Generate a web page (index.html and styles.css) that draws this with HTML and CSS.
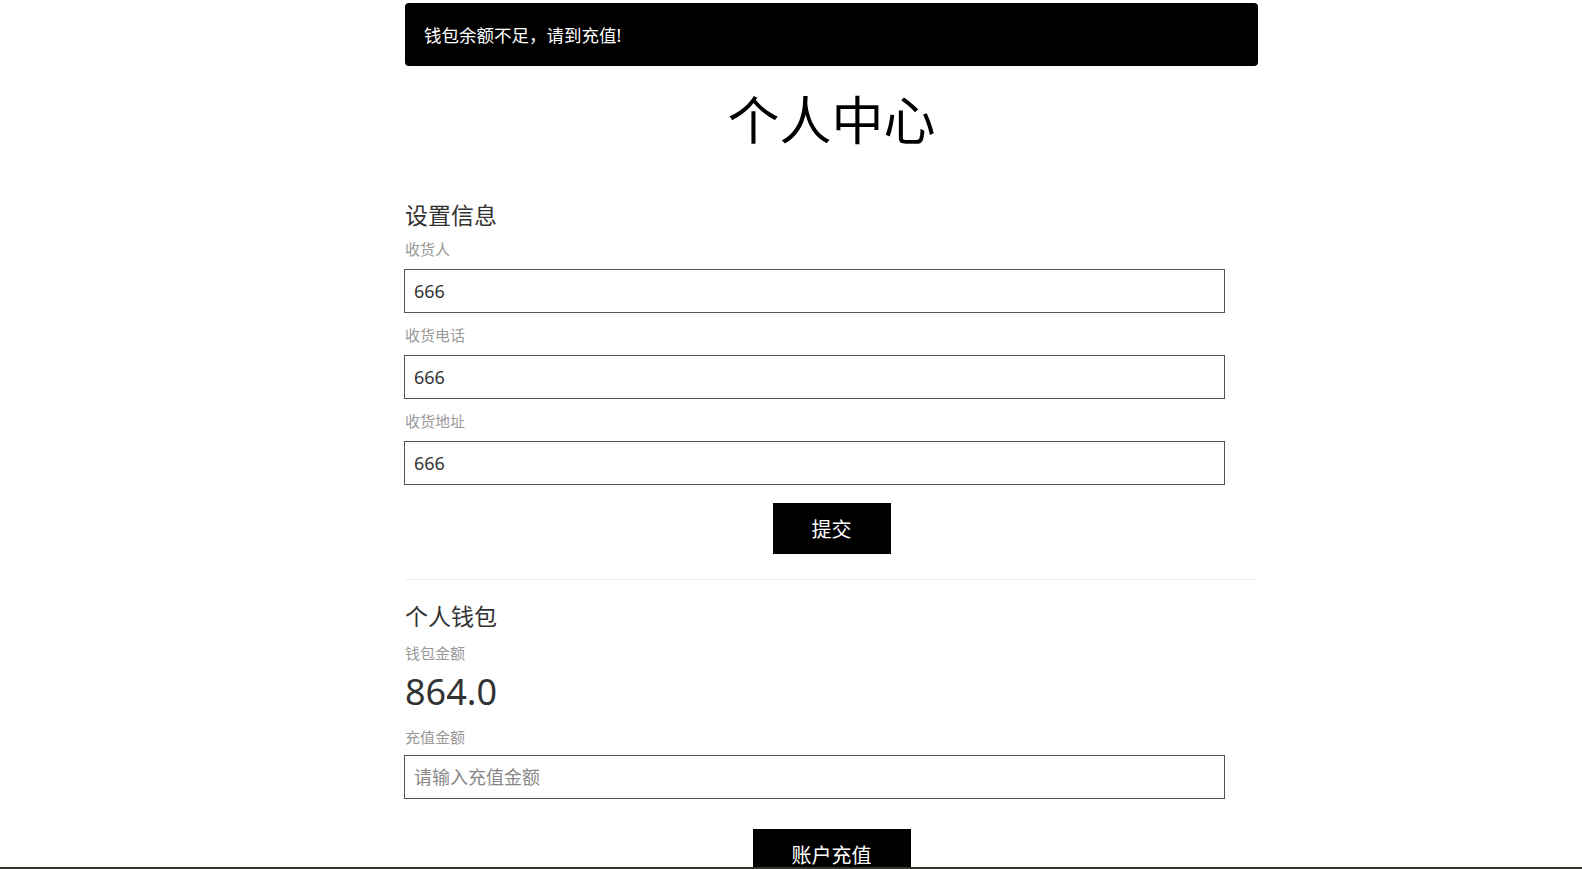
FILE: index.html
```html
<!DOCTYPE html>
<html lang="zh-CN">
<head>
  <meta charset="UTF-8">
  <meta name="viewport" content="width=device-width, initial-scale=1.0">
  <title>个人中心</title>
  <link rel="stylesheet" href="styles.css">
</head>
<body>
  <div class="page">
    <div class="alert">钱包余额不足，请到充值!</div>

    <h1 class="title">个人中心</h1>

    <div class="section">
      <h2>设置信息</h2>
      <label for="consignee">收货人</label>
      <input type="text" id="consignee" value="666">
      <label for="phone" class="next">收货电话</label>
      <input type="text" id="phone" value="666">
      <label for="address" class="next">收货地址</label>
      <input type="text" id="address" value="666">
      <div class="actions">
        <button class="btn">提交</button>
      </div>
    </div>

    <hr class="divider">

    <div class="section">
      <h2 class="wallet-title">个人钱包</h2>
      <label class="wallet-label">钱包金额</label>
      <div class="balance">864.0</div>
      <label for="amount" class="amount-label">充值金额</label>
      <input type="text" id="amount" placeholder="请输入充值金额">
      <div class="actions recharge">
        <button class="btn">账户充值</button>
      </div>
    </div>
  </div>
  <div class="screen-edge"></div>
</body>
</html>
```

FILE: styles.css
```css
body { margin: 0; background: #fff; font-family: "Noto Sans", "Noto Sans CJK SC", sans-serif; color: #333; overflow: hidden; }
.page { width: 853px; margin: 0 0 0 405px; padding-top: 3px; }

.alert { height: 63px; display: flex; align-items: center; padding: 0 19px; background: #000; color: #fff; border-radius: 4px; font-size: 17.5px; }

.title { margin: 22px 0 0; font-size: 52px; line-height: 64px; font-weight: normal; text-align: center; color: #000; }

.section h2 { margin: 48px 0 0; font-size: 23px; line-height: 30px; font-weight: normal; color: #333; }
.section label { display: block; margin-top: 9px; margin-bottom: 10px; font-size: 15px; line-height: 20px; color: #999; }
.section label.next { margin-top: 12px; }
.section input { display: block; box-sizing: border-box; width: 821px; height: 44px; margin: 0 0 0 -1px; padding: 0 9px; border: 1px solid #555; border-radius: 0; font-family: inherit; font-size: 18px; color: #333; outline: none; }
.section input::placeholder { color: #888; }

.actions { margin-top: 18px; text-align: center; }
.btn { height: 51px; padding: 0 39px; border: none; background: #000; color: #fff; font-family: inherit; font-size: 20px; cursor: pointer; }

.divider { margin: 25px 0 0; border: none; border-top: 1px solid #eee; }

.section h2.wallet-title { margin-top: 21px; }
.section label.wallet-label { margin-top: 12px; margin-bottom: 0; }
.balance { margin-top: 7px; font-size: 36px; line-height: 44px; color: #333; }
.section label.amount-label { margin-top: 13px; margin-bottom: 8px; }
.recharge { margin-top: 30px; }

.screen-edge { position: fixed; left: 0; right: 0; bottom: 0; height: 2px; background: #33352e; }
```
